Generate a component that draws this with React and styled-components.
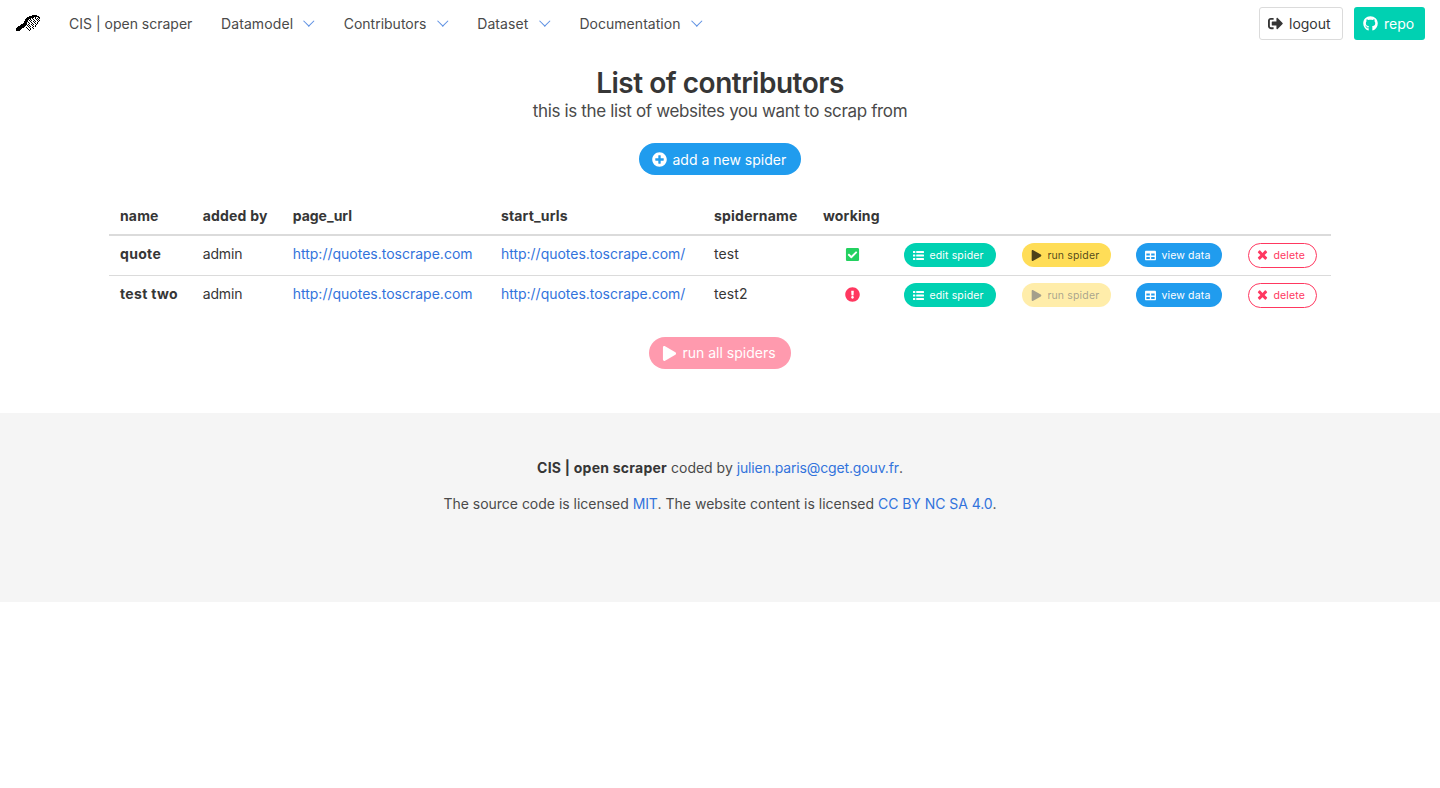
import React from 'react';
import styled, { createGlobalStyle, css } from 'styled-components';
import {
  FaSignOutAlt, FaGithub, FaPlusCircle, FaCheckSquare, FaExclamationCircle, FaPlay, FaTable,
} from 'react-icons/fa';

const GlobalStyle = createGlobalStyle`
  *, *::before, *::after { box-sizing: border-box; }
  html { background: #fff; }
  body {
    margin: 0;
    font: 400 14px/21.6px Inter, "Liberation Sans", sans-serif;
    color: #4a4a4a;
  }
`;

const Navbar = styled.nav`
  display: flex;
  justify-content: space-between;
  height: 47px;
  background: #fff;
`;

const NavGroup = styled.div`
  display: flex;
  align-items: center;
`;

const Brand = styled.a`
  display: flex;
  width: 58px;
  padding: 0 16px 2px;
`;

const NavItem = styled.a`
  display: flex;
  align-items: center;
  justify-content: space-between;
  width: ${(p) => p.$width}px;
  padding: 1px 20px 0 11px;
  letter-spacing: ${(p) => p.$tracking || 0}px;
  white-space: nowrap;
`;

const Arrow = styled.span`
  width: 7.6px;
  height: 7.6px;
  margin-top: -7px;
  border: solid #3273dc;
  border-width: 0 1px 1px 0;
  opacity: 0.8;
  transform: rotate(45deg);
`;

const NavButtons = styled(NavGroup)`
  gap: 11px;
  padding-right: 15px;
`;

const buttonTones = {
  plain: css`background: #fff; color: #363636; border-color: #dbdbdb;`,
  primary: css`background: #00d1b2; color: #fff;`,
  info: css`background: #209cee; color: #fff;`,
  warning: css`background: #ffdd57; color: rgba(0, 0, 0, 0.7);`,
  danger: css`background: #ff3860; color: #fff;`,
  outlined: css`background: #fff; color: #ff3860; border-color: #ff3860;`,
};

const Button = styled.button`
  display: inline-flex;
  align-items: center;
  width: ${(p) => p.$width}px;
  height: 33px;
  padding: 0 0 0 8px;
  border: 1px solid transparent;
  border-radius: 3px;
  font: inherit;
  line-height: 20px;
  white-space: nowrap;
  ${(p) => buttonTones[p.$tone]}

  svg { flex: none; width: 15px; height: 15px; margin-right: 6px; }
  &:disabled { opacity: 0.5; }
`;

const ButtonLabel = styled.span`
  padding-top: ${(p) => p.$drop || 0}px;
`;

const PillButton = styled(Button)`
  height: 32px;
  padding-left: 11.5px;
  border-radius: 16px;
`;

const SmallButton = styled(Button)`
  height: ${(p) => (p.$tone === 'outlined' ? 25 : 24)}px;
  padding-left: 8.4px;
  border-radius: 13px;
  font-size: 10.5px;
  letter-spacing: 0.16px;
  vertical-align: top;

  svg {
    width: 11px;
    height: 11px;
    margin: ${(p) => (p.$tone === 'outlined' ? '-2px 5px 0 0' : '0 5px 0 0')};
  }
`;

const Main = styled.main`
  display: flex;
  flex-direction: column;
  align-items: center;
  height: 366px;
`;

const Title = styled.h1`
  margin: 19px 0 0;
  font-size: 28px;
  line-height: 34px;
  font-weight: 600;
  letter-spacing: -0.48px;
  color: #363636;
`;

const Subtitle = styled.p`
  margin: 0 0 21px;
  font-size: 17px;
  line-height: 22px;
  letter-spacing: -0.35px;
`;

const Table = styled.table`
  width: 1222px;
  margin: 23px 0 21px;
  border-collapse: separate;
  border-spacing: 0;
  table-layout: fixed;
  color: #363636;
`;

const HeadCell = styled.th`
  width: ${(p) => p.$width}px;
  height: 38px;
  padding: 0 0 1px 11px;
  border-bottom: 2px solid #dbdbdb;
  text-align: left;
  font-weight: 700;
  letter-spacing: ${(p) => p.$tracking}px;
`;

const Cell = styled.td`
  height: 40px;
  padding: 7px 0 0 11px;
  border-bottom: ${(p) => (p.$last ? 0 : '1px solid #dbdbdb')};
  vertical-align: top;
  font-weight: ${(p) => (p.$strong ? 700 : 400)};
  letter-spacing: ${(p) => p.$tracking || 0}px;
`;

const Status = styled.span`
  display: flex;
  height: 22px;
  padding-left: 22px;
  align-items: center;
  color: ${(p) => (p.$ok ? '#23d160' : '#ff3860')};
`;

const Link = styled.a`
  color: #3273dc;
  letter-spacing: ${(p) => p.$tracking || 0}px;
`;

const Footer = styled.footer`
  height: 189px;
  padding-top: 44px;
  background: #f5f5f5;
  text-align: center;
`;

const FooterLine = styled.p`
  margin: 0 0 14.4px;
  letter-spacing: ${(p) => p.$tracking || 0}px;
`;

const Strong = styled.strong`
  color: #363636;
  font-weight: 700;
  letter-spacing: 0.24px;
`;

const brushRows = [
  '................#####...',
  '.............##########.',
  '...........#######.#..##',
  '..........#####.#..#.#.#',
  '.........####.#..#..#.#.',
  '.........###.#.#..#..#.#',
  '........####..#..#.#..#.',
  '........###.#..#..#..#..',
  '.......####..#..#..#.#..',
  '.....######.#..#.#..#...',
  '....######.#.#..#..#....',
  '..#######...#.#..#.#....',
  '.#######..#..#..#.......',
  '######.....#..#..#......',
  '#####.......#.#.........',
  '####.........#..........',
];

function BrushLogo() {
  return (
    <svg width="24" height="16" viewBox="0 0 24 16" shapeRendering="crispEdges">
      {brushRows.flatMap((row, y) => [...row].map((c, x) => (
        c === '#' ? <rect key={`${x}-${y}`} x={x} y={y} width="1" height="1" fill="#000" /> : null
      )))}
    </svg>
  );
}

function ListIcon() {
  return (
    <svg viewBox="0 0 11 11" fill="currentColor">
      {[0.9, 4.4, 7.9].map((y) => (
        <React.Fragment key={y}>
          <rect x="0" y={y} width="2.3" height="2.2" rx="0.4" />
          <rect x="3.2" y={y + 0.2} width="7.8" height="1.8" rx="0.3" />
        </React.Fragment>
      ))}
    </svg>
  );
}

function CrossIcon() {
  return (
    <svg viewBox="192 192 1408 1408" fill="currentColor">
      <path d="M1490 1322q0 40-28 68l-136 136q-28 28-68 28t-68-28l-294-294-294 294q-28 28-68 28t-68-28l-136-136q-28-28-28-68t28-68l294-294-294-294q-28-28-28-68t28-68l136-136q28-28 68-28t68 28l294 294 294-294q28-28 68-28t68 28l136 136q28 28 28 68t-28 68l-294 294 294 294q28 28 28 68z" />
    </svg>
  );
}

const menu = [
  { label: 'Datamodel', width: 122.7, tracking: 0.1 },
  { label: 'Contributors', width: 133.5 },
  { label: 'Dataset', width: 102.2, tracking: 0.1 },
  { label: 'Documentation', width: 152, tracking: 0.04 },
];

const columns = [
  ['name', 82.7, 0.15], ['added by', 90, 0.2], ['page_url', 208.3, 0], ['start_urls', 213, 0.15],
  ['spidername', 109, 0.22], ['working', 81, 0.15], ['', 118, 0], ['', 114, 0], ['', 112, 0], ['', 94, 0],
];

const spiders = [
  { name: 'quote', spider: 'test', ok: true },
  { name: 'test two', spider: 'test2', ok: false },
];

function SpiderRow({ name, spider, ok, last }) {
  return (
    <tr>
      <Cell $strong $tracking={0.32} $last={last}>{name}</Cell>
      <Cell $last={last} $tracking={-0.15}>admin</Cell>
      <Cell $last={last}><Link>http://quotes.toscrape.com</Link></Cell>
      <Cell $last={last}><Link $tracking={-0.02}>http://quotes.toscrape.com/</Link></Cell>
      <Cell $last={last} $tracking={0.1}>{spider}</Cell>
      <Cell $last={last}>
        <Status $ok={ok}>{ok ? <FaCheckSquare size={15} /> : <FaExclamationCircle size={15} />}</Status>
      </Cell>
      <Cell $last={last}>
        <SmallButton $tone="primary" $width={92}><ListIcon /><ButtonLabel $drop={2}>edit spider</ButtonLabel></SmallButton>
      </Cell>
      <Cell $last={last}>
        <SmallButton $tone="warning" $width={89} disabled={!ok}><FaPlay /><ButtonLabel $drop={2}>run spider</ButtonLabel></SmallButton>
      </Cell>
      <Cell $last={last}>
        <SmallButton $tone="info" $width={86}><FaTable /><ButtonLabel $drop={2}>view data</ButtonLabel></SmallButton>
      </Cell>
      <Cell $last={last}>
        <SmallButton $tone="outlined" $width={69}><CrossIcon /><ButtonLabel>delete</ButtonLabel></SmallButton>
      </Cell>
    </tr>
  );
}

export default function App() {
  return (
    <>
      <GlobalStyle />
      <Navbar>
        <NavGroup>
          <Brand><BrushLogo /></Brand>
          <NavItem $width={152}>CIS | open scraper</NavItem>
          {menu.map((m) => (
            <NavItem key={m.label} $width={m.width} $tracking={m.tracking}>{m.label}<Arrow /></NavItem>
          ))}
        </NavGroup>
        <NavButtons>
          <Button $tone="plain" $width={84}><FaSignOutAlt />logout</Button>
          <Button $tone="primary" $width={71}><FaGithub />repo</Button>
        </NavButtons>
      </Navbar>
      <Main>
        <Title>List of contributors</Title>
        <Subtitle>this is the list of websites you want to scrap from</Subtitle>
        <PillButton $tone="info" $width={162}><FaPlusCircle /><ButtonLabel $drop={2}>add a new spider</ButtonLabel></PillButton>
        <Table>
          <thead>
            <tr>
              {columns.map(([label, width, tracking], i) => (
                <HeadCell key={i} $width={width} $tracking={tracking}>{label}</HeadCell>
              ))}
            </tr>
          </thead>
          <tbody>
            {spiders.map((s, i) => <SpiderRow key={s.name} {...s} last={i === spiders.length - 1} />)}
          </tbody>
        </Table>
        <PillButton $tone="danger" $width={142} disabled><FaPlay /><ButtonLabel>run all spiders</ButtonLabel></PillButton>
      </Main>
      <Footer>
        <FooterLine>
          <Strong>CIS | open scraper</Strong> coded by <Link $tracking={-0.14}>julien.paris@cget.gouv.fr</Link>.
        </FooterLine>
        <FooterLine $tracking={-0.01}>
          The source code is licensed <Link $tracking={-0.2}>MIT</Link>. The website content is licensed <Link $tracking={-0.05}>CC BY NC SA 4.0</Link>.
        </FooterLine>
      </Footer>
    </>
  );
}
